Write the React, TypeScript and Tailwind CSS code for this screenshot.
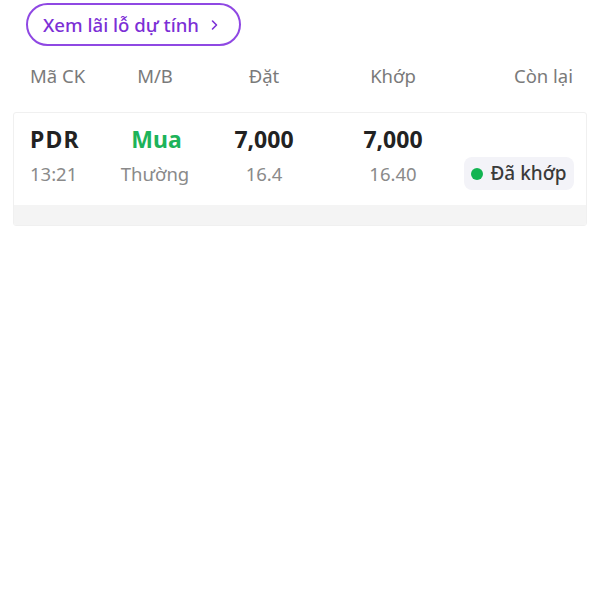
import React from "react";

export default function App() {
  const font = { fontFamily: '"Noto Sans", "Open Sans", sans-serif' };
  return (
    <div className="w-[600px] h-[600px] bg-white pt-[3px]" style={font}>
      <div className="pl-[26px]">
        <button className="h-[43px] w-[215px] rounded-full border-2 border-[#8f48e3] text-[#7c2fd6] text-[18.6px] flex items-center pl-[15px] gap-[11px] font-medium">
          <span>Xem lãi lỗ dự tính</span>
          <svg width="9" height="12" viewBox="0 0 9 12" fill="none">
            <path d="M2.5 2 L6.5 6 L2.5 10" stroke="#7c2fd6" strokeWidth="1.6" strokeLinecap="round" strokeLinejoin="round" />
          </svg>
        </button>
      </div>
      <div className="mt-[18px] flex pl-[30px] pr-[27px] text-[18.5px] leading-[24px] text-[#7a7a7a]">
        <div className="w-[80px]">Mã CK</div>
        <div className="w-[90px] text-center">M/B</div>
        <div className="w-[128px] text-center">Đặt</div>
        <div className="w-[130px] text-center">Khớp</div>
        <div className="flex-1 text-right whitespace-nowrap">Còn lại</div>
      </div>
      <div className="mt-[24px] mx-[13px] border border-[#f0f0f0] rounded-[3px] overflow-hidden">
        <div className="pt-[12px] pb-[15px] pl-[16px] pr-[12px]">
          <div className="flex items-center h-[28px] text-[23px] font-bold text-[#222]">
            <div className="w-[80px] tracking-[1.2px]">PDR</div>
            <div className="w-[90px] text-center text-[#1db35a] pl-[3px]">Mua</div>
            <div className="w-[128px] text-center">7,000</div>
            <div className="w-[130px] text-center">7,000</div>
            <div className="flex-1" />
          </div>
          <div className="mt-[4px] flex items-center h-[33px] text-[18.5px] text-[#8a8a8a]">
            <div className="w-[80px]">13:21</div>
            <div className="w-[90px] text-center whitespace-nowrap">Thường</div>
            <div className="w-[128px] text-center">16.4</div>
            <div className="w-[130px] text-center">16.40</div>
            <div className="flex-1 flex justify-end">
              <div className="h-[33px] w-[110px] rounded-[8px] bg-[#f3f3f8] flex items-center justify-center gap-[7px] text-[#3a3a3a] text-[19px] font-medium whitespace-nowrap">
                <span className="w-[12px] h-[12px] rounded-full bg-[#12b451] shrink-0" />
                <span>Đã khớp</span>
              </div>
            </div>
          </div>
        </div>
        <div className="h-[20px] bg-[#f4f4f4]" />
      </div>
    </div>
  );
}
